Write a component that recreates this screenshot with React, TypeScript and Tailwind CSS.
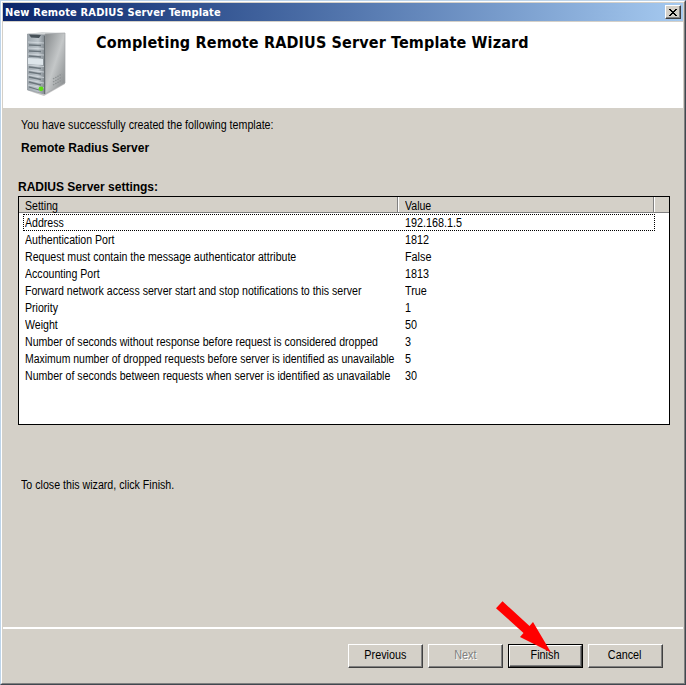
const rows = [
  ["Address", "192.168.1.5"],
  ["Authentication Port", "1812"],
  ["Request must contain the message authenticator attribute", "False"],
  ["Accounting Port", "1813"],
  ["Forward network access server start and stop notifications to this server", "True"],
  ["Priority", "1"],
  ["Weight", "50"],
  ["Number of seconds without response before request is considered dropped", "3"],
  ["Maximum number of dropped requests before server is identified as unavailable", "5"],
  ["Number of seconds between requests when server is identified as unavailable", "30"],
];

function ServerIcon() {
  return (
    <svg width="42" height="66" viewBox="0 0 42 66" className="block">
      <defs>
        <linearGradient id="side" x1="0" y1="0" x2="1" y2="1">
          <stop offset="0" stopColor="#85898b" />
          <stop offset="0.5" stopColor="#c4c7c8" />
          <stop offset="1" stopColor="#7f8385" />
        </linearGradient>
        <linearGradient id="front" x1="0" y1="0" x2="1" y2="0">
          <stop offset="0" stopColor="#9da6ad" />
          <stop offset="0.6" stopColor="#bcc4ca" />
          <stop offset="1" stopColor="#7d858b" />
        </linearGradient>
      </defs>
      <path d="M3 60 L18 65 L39 53 L39 51 L18 62 Z" fill="#c8c8c8" />
      <path d="M2 3 L16 1 L39 2 L19 4 Z" fill="#d4d7d8" />
      <path d="M19 3 L39 2 L39 52 L19 63 Z" fill="url(#side)" stroke="#a0a4a6" strokeWidth="0.7" />
      <path d="M1.500 3 L19 4 L19 63 L1.500 59 Z" fill="url(#front)" stroke="#899096" strokeWidth="0.7" />
      <path d="M3 3.500 L15 4 L13 7 L5 6.500 Z" fill="#465057" />
      <g stroke="#6b757c" strokeWidth="1.300">
        <path d="M3 14 L15 14.500 M3 20 L15 20.500 M3 25 L15 26 M3 36 L15 37.500 M3 41 L15 43 M3 46 L15 48.500 M3 51 L15 54 M3 56 L13 59" />
      </g>
      <g stroke="#d4dbe0" strokeWidth="0.8">
        <path d="M2 11 L18 12 M2 17 L18 18 M2 23 L18 24 M2 34 L18 35.500 M2 39 L18 41 M2 44 L18 46.500 M2 49 L18 52 M2 54 L18 57" />
      </g>
      <path d="M2 27 L17 28 L17 34 L2 33 Z" fill="#dde5ea" />
      <path d="M18.500 5 V63" stroke="#676e72" strokeWidth="1" />
      <path d="M27 48 L36 43 M27 51 L36 46 M27 54 L36 49" stroke="#8c9193" strokeWidth="1.300" strokeDasharray="1.500 1" />
      <circle cx="15" cy="57.800" r="2.400" fill="#5cde14" />
    </svg>
  );
}

function Button({ label, tone = "normal" }: { label: string; tone?: "normal" | "disabled" | "default" }) {
  const face =
    "flex h-full w-full items-center justify-center border border-t-white border-l-white border-r-[#404040] border-b-[#404040] shadow-[inset_-1px_-1px_0_#808080] pr-px pb-px";
  return (
    <button className={tone === "default" ? "h-6 w-[75px] border border-black" : "h-6 w-[75px]"}>
      <span className={face}>
        <span
          className={
            tone === "disabled"
              ? "inline-block scale-x-[0.9] text-[#808080] [text-shadow:1px_1px_0_white]"
              : "inline-block scale-x-[0.9]"
          }
        >
          {label}
        </span>
      </span>
    </button>
  );
}

export default function App() {
  return (
    <div className="relative flex h-[685px] w-[686px] flex-col overflow-hidden border-t border-l border-r border-b border-t-[#bdd4ea] border-l-[#bdd4ea] border-r-[#404850] border-b-[#404850] bg-[#d4d0c8] font-['Liberation_Sans',Arial,sans-serif] text-[12px] leading-[17px] text-black">
      <div className="flex min-h-0 flex-1 flex-col border border-t-white border-l-white border-r-[#808080] border-b-[#808080] p-px">
        <header className="flex h-[18px] shrink-0 items-center justify-between bg-gradient-to-r from-[#0a246a] to-[#a6caf0] pr-0.5 pl-0.5">
          <h1 className="font-['DejaVu_Sans_Condensed','DejaVu_Sans',sans-serif] text-[11px] font-bold tracking-[0.15px] whitespace-nowrap text-white">
            New Remote RADIUS Server Template
          </h1>
          <button className="flex h-[14px] w-4 items-center justify-center border border-t-white border-l-white border-r-[#404040] border-b-[#404040] bg-[#d4d0c8] shadow-[inset_-1px_-1px_0_#808080]">
            <svg width="8" height="7" viewBox="0 0 8 7" shapeRendering="crispEdges">
              <path d="M0 0h2v1H0zM6 0h2v1H6zM1 1h2v1H1zM5 1h2v1H5zM2 2h4v1H2zM3 3h2v1H3zM2 4h4v1H2zM1 5h2v1H1zM5 5h2v1H5zM0 6h2v1H0zM6 6h2v1H6z" />
            </svg>
          </button>
        </header>
        <section className="mt-px flex h-[86px] shrink-0 bg-white pt-[9px] pl-[23px]">
          <ServerIcon />
          <h2 className="ml-7 font-['DejaVu_Sans_Condensed','DejaVu_Sans',sans-serif] text-[16px] leading-6 font-bold tracking-[0.15px] whitespace-nowrap">
            Completing Remote RADIUS Server Template Wizard
          </h2>
        </section>
        <main className="flex flex-1 flex-col px-[15px] pt-[9px] whitespace-nowrap">
          <p className="ml-[3px] origin-left scale-x-[0.89]">You have successfully created the following template:</p>
          <p className="mt-[6px] pl-[3px] font-bold">Remote Radius Server</p>
          <h3 className="mt-[22px] font-bold">RADIUS Server settings:</h3>
          <div className="h-[229px] w-[652px] border border-black bg-white">
            <div className="flex h-4 border-b border-[#808080] bg-[#d4d0c8] pl-1.5 leading-[19px]">
              <div className="h-[15px] w-[373px] border-r border-[#808080]">
                <span className="inline-block origin-left scale-x-[0.88]">Setting</span>
              </div>
              <div className="h-[15px] w-[256px] border-r border-l border-r-[#808080] border-l-white pl-1.5">
                <span className="inline-block origin-left scale-x-[0.88]">Value</span>
              </div>
              <div className="flex-1 border-l border-white" />
            </div>
            <div className="pt-px pl-1">
              {rows.map(([name, value], i) => (
                <div
                  key={name}
                  className={
                    i === 0
                      ? "flex h-[17px] w-[632px] border border-dotted border-black leading-[17px]"
                      : "flex h-[17px] w-[632px] border border-transparent leading-[17px]"
                  }
                >
                  <div className="w-[381px] pl-px">
                    <span
                      className={
                        i === 8
                          ? "inline-block origin-left scale-x-[0.872]"
                          : "inline-block origin-left scale-x-[0.882]"
                      }
                    >
                      {name}
                    </span>
                  </div>
                  <span className="inline-block origin-left scale-x-[0.9]">{value}</span>
                </div>
              ))}
            </div>
          </div>
          <p className="mt-[52px] ml-[3px] origin-left scale-x-[0.887]">To close this wizard, click Finish.</p>
        </main>
        <footer className="flex h-[55px] shrink-0 justify-end gap-[5px] border-t-2 border-white pt-[15px] pr-5">
          <Button label="Previous" />
          <Button label="Next" tone="disabled" />
          <Button label="Finish" tone="default" />
          <Button label="Cancel" />
        </footer>
      </div>
      <svg className="absolute top-[598px] left-[492px]" width="62" height="56" viewBox="492 598 62 56">
        <path d="M501.500 600.300 L528.500 625 L532 621 L550 651.500 L519 636 L522.500 632 L495 607.300 Z" fill="#ff0000" />
      </svg>
    </div>
  );
}
